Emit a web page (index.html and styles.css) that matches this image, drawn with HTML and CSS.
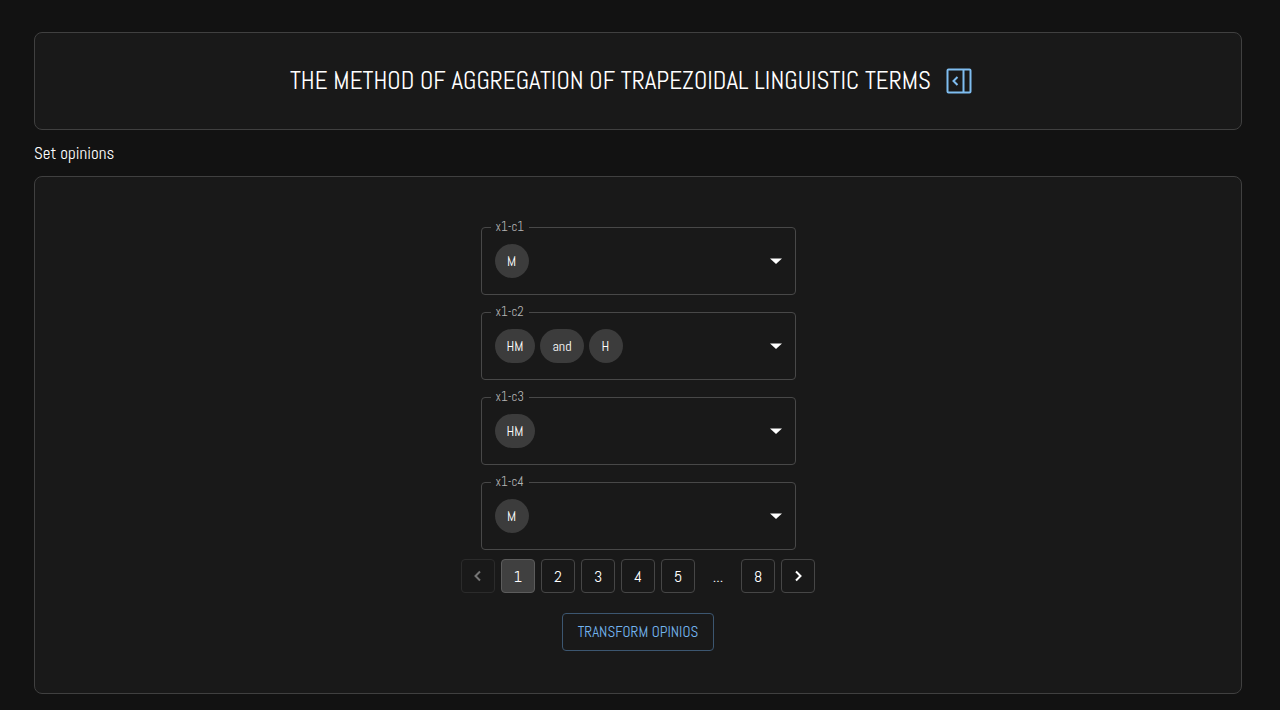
FILE: index.html
```
<!DOCTYPE html>
<html lang="en">
<head>
<meta charset="utf-8">
<meta name="viewport" content="width=device-width, initial-scale=1">
<title>Aggregation of trapezoidal linguistic terms</title>
<link rel="stylesheet" href="styles.css">
</head>
<body>
<main class="page">
  <header class="panel header">
    <h1 class="title">THE METHOD OF AGGREGATION OF TRAPEZOIDAL LINGUISTIC TERMS</h1>
    <button class="icon-button" type="button" aria-label="Toggle side panel">
      <svg width="26" height="26" viewBox="0 0 26 26" fill="none" stroke="currentColor" stroke-width="2"><rect x="1.500" y="1.500" width="23" height="23" rx="1"/><path d="M17.500 1.500v23M11.500 9l-4 4 4 4"/></svg>
    </button>
  </header>
  <h2 class="subtitle">Set opinions</h2>
  <section class="panel opinions">
    <div class="fields">
      <fieldset class="field">
        <legend class="legend"><label for="c1">x1-c1</label></legend>
        <div class="chips"><span class="chip">M</span></div>
        <svg class="arrow" width="24" height="24" viewBox="0 0 24 24"><path d="M6 9.500h12l-6 5.500z" fill="currentColor"/></svg>
        <select class="select" id="c1"><option>M</option></select>
      </fieldset>
      <fieldset class="field">
        <legend class="legend"><label for="c2">x1-c2</label></legend>
        <div class="chips"><span class="chip">HM</span><span class="chip">and</span><span class="chip">H</span></div>
        <svg class="arrow" width="24" height="24" viewBox="0 0 24 24"><path d="M6 9.500h12l-6 5.500z" fill="currentColor"/></svg>
        <select class="select" id="c2"><option>HM and H</option></select>
      </fieldset>
      <fieldset class="field">
        <legend class="legend"><label for="c3">x1-c3</label></legend>
        <div class="chips"><span class="chip">HM</span></div>
        <svg class="arrow" width="24" height="24" viewBox="0 0 24 24"><path d="M6 9.500h12l-6 5.500z" fill="currentColor"/></svg>
        <select class="select" id="c3"><option>HM</option></select>
      </fieldset>
      <fieldset class="field">
        <legend class="legend"><label for="c4">x1-c4</label></legend>
        <div class="chips"><span class="chip">M</span></div>
        <svg class="arrow" width="24" height="24" viewBox="0 0 24 24"><path d="M6 9.500h12l-6 5.500z" fill="currentColor"/></svg>
        <select class="select" id="c4"><option>M</option></select>
      </fieldset>
    </div>
    <nav class="pagination" aria-label="Pages">
      <button class="page-button" type="button" disabled aria-label="Previous page"><svg width="20" height="20" viewBox="0 0 20 20" fill="none" stroke="currentColor" stroke-width="2"><path d="M12 5.500L7.500 10l4.500 4.500"/></svg></button>
      <button class="page-button current" type="button" aria-current="page">1</button>
      <button class="page-button" type="button">2</button>
      <button class="page-button" type="button">3</button>
      <button class="page-button" type="button">4</button>
      <button class="page-button" type="button">5</button>
      <span class="ellipsis">...</span>
      <button class="page-button" type="button">8</button>
      <button class="page-button" type="button" aria-label="Next page"><svg width="20" height="20" viewBox="0 0 20 20" fill="none" stroke="currentColor" stroke-width="2"><path d="M8 5.500l4.500 4.500L8 14.500"/></svg></button>
    </nav>
    <button class="submit" type="button">TRANSFORM OPINIOS</button>
  </section>
</main>
</body>
</html>
```
FILE: styles.css
```
* { box-sizing: border-box; }

body {
  margin: 0;
  background: #121212;
  color: #fff;
  font-family: "Abel", "Liberation Sans Narrow", "Roboto Condensed", "Open Sans Condensed", "Liberation Sans", sans-serif;
  font-size: 16px;
}

button { font: inherit; cursor: pointer; }

.page { padding: 32px 38px 16px 34px; }

.panel {
  background: #191919;
  border: 1px solid #404040;
  border-radius: 8px;
}

.header {
  display: flex;
  align-items: center;
  justify-content: center;
  gap: 15px;
  padding: 32px 22px 32px 8px;
}

.title {
  margin: 0;
  font-size: 25px;
  line-height: 32px;
  font-weight: 400;
}

.icon-button {
  display: flex;
  padding: 0;
  border: 0;
  background: none;
  color: #7fbdf0;
}

.subtitle {
  margin: 12px 0;
  font-size: 17px;
  line-height: 22px;
  font-weight: 400;
}

.opinions {
  display: flex;
  flex-direction: column;
  align-items: center;
  padding: 42px 16px;
}

.fields {
  display: grid;
  gap: 9px;
  width: 315px;
  max-width: 100%;
}

.field {
  display: grid;
  grid-template-columns: 1fr auto;
  align-items: center;
  min-width: 0;
  margin: 0;
  padding: 9px 7px 16px 13px;
  border: 1px solid #484848;
  border-radius: 4px;
}

.legend {
  margin-left: -4px;
  padding: 0 5px;
  color: #b4b4b4;
  font-size: 13px;
  line-height: 16px;
}

.chips {
  grid-area: 1 / 1;
  display: flex;
  gap: 5px;
}

.chip {
  min-width: 34px;
  padding: 0 12px;
  border-radius: 17px;
  background: #3c3c3c;
  font-size: 14px;
  line-height: 34px;
  text-align: center;
}

.arrow { grid-area: 1 / 2; }

.select {
  grid-area: 1 / 1 / 2 / 3;
  width: 100%;
  height: 34px;
  opacity: 0;
  cursor: pointer;
}

.pagination {
  display: flex;
  gap: 6px;
  margin-top: 9px;
}

.page-button,
.ellipsis {
  display: flex;
  align-items: center;
  justify-content: center;
  width: 34px;
  height: 34px;
}

.page-button {
  padding: 0;
  border: 1px solid #464646;
  border-radius: 4px;
  background: none;
  color: #fff;
}

.page-button:disabled {
  border-color: #2b2b2b;
  color: #757575;
}

.page-button.current {
  border-color: #5c5c5c;
  background: #404040;
}

.submit {
  margin-top: 20px;
  padding: 0 15px;
  border: 1px solid #3c5670;
  border-radius: 4px;
  background: none;
  color: #73b4ee;
  font-size: 15px;
  line-height: 36px;
}
```
